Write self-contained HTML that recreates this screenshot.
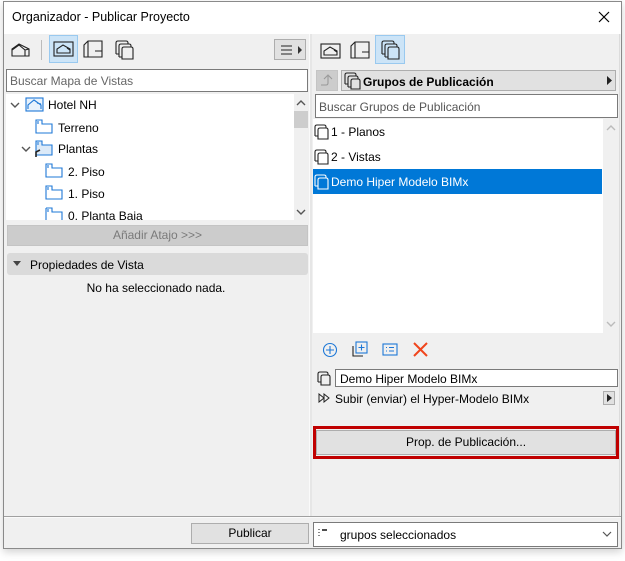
<!DOCTYPE html>
<html><head><meta charset="utf-8"><style>
*{box-sizing:border-box;margin:0;padding:0}
body{width:625px;height:561px;background:#fff;font-family:"Liberation Sans",sans-serif;font-size:12px;color:#000;position:relative;overflow:hidden}
.a{position:absolute}
.win{left:3px;top:1px;width:619px;height:548px;border:1px solid #8a8a8a;background:#f0f0f0;box-shadow:0 3px 8px rgba(0,0,0,.18)}
.box{background:#fff;border:1px solid #7a7a7a}
.btn{background:#e1e1e1;border:1px solid #adadad;text-align:center}
.t{white-space:nowrap}
</style></head><body>
<div class="a win"></div>
<div class="a" style="left:4px;top:2px;width:617px;height:32px;background:#fff"></div>
<div class="a t" style="left:12px;top:10px;font-size:12.5px">Organizador - Publicar Proyecto</div>
<svg class="a" style="left:598px;top:11px" width="12" height="12"><path d="M1 1L11 11M11 1L1 11" stroke="#000" stroke-width="1.2"/></svg>

<!-- pane separator -->
<div class="a" style="left:309px;top:34px;width:1px;height:482px;background:#fafafa"></div>
<div class="a" style="left:310px;top:34px;width:2px;height:482px;background:#e6e6e6"></div>

<!-- left toolbar -->
<svg class="a" style="left:11px;top:42px" width="20" height="16"><path d="M1 14V7L8 2L18 7V14Z M1 8L8 3L14 8V14 M14 8L18 7" fill="none" stroke="#222" stroke-width="1.1"/></svg>
<div class="a" style="left:41px;top:40px;width:1px;height:20px;background:#bbb"></div>
<div class="a" style="left:49px;top:35px;width:29px;height:28px;background:#cce4f7;border:1px solid #99c9ef"></div>
<svg class="a" style="left:53px;top:40px" width="22" height="18"><rect x="1" y="2" width="19" height="14" fill="none" stroke="#222" stroke-width="1.1"/><path d="M4 13V9L10 5L17 9V13Z M14 8L17 10" fill="none" stroke="#222" stroke-width="1.1"/></svg>
<svg class="a" style="left:83px;top:40px" width="20" height="19"><path d="M1 17V5L5 1H19V17Z M5 1V17 M12 11H19" fill="none" stroke="#222" stroke-width="1.1"/></svg>
<svg class="a" style="left:114px;top:40px" width="20" height="20"><path d="M2 14V3Q2 1 4 1H12Q14 1 14 3V4 M5 17V6Q5 4 7 4H15Q17 4 17 6V7 M8 19V9Q8 7 10 7H17Q19 7 19 9V19Z M2 14H5 M5 17H8" fill="none" stroke="#222" stroke-width="1.1"/></svg>
<div class="a btn" style="left:274px;top:39px;width:32px;height:21px"></div>
<svg class="a" style="left:280px;top:44px" width="24" height="12"><path d="M1 2H12M1 6H12M1 10H12" stroke="#222" stroke-width="1.1"/><path d="M18 2L22 6L18 10Z" fill="#333"/></svg>

<div class="a box" style="left:6px;top:69px;width:302px;height:23px"></div>
<div class="a t" style="left:10px;top:74px;color:#666">Buscar Mapa de Vistas</div>

<!-- tree -->
<div class="a" style="left:6px;top:94px;width:288px;height:126px;background:#fff"></div>
<div class="a" style="left:294px;top:94px;width:14px;height:126px;background:#f0f0f0"></div>
<svg class="a" style="left:296px;top:99px" width="10" height="8"><path d="M1 6L5 2L9 6" fill="none" stroke="#555" stroke-width="1.4"/></svg>
<div class="a" style="left:294px;top:111px;width:14px;height:17px;background:#cdcdcd"></div>
<svg class="a" style="left:296px;top:208px" width="10" height="8"><path d="M1 2L5 6L9 2" fill="none" stroke="#555" stroke-width="1.4"/></svg>

<svg class="a" style="left:10px;top:101px" width="10" height="8"><path d="M1 2L5 6L9 2" fill="none" stroke="#555" stroke-width="1.4"/></svg>
<svg class="a" style="left:25px;top:96px" width="20" height="17"><rect x="1" y="2" width="17" height="13" fill="#e8f2fc" stroke="#1e78d7" stroke-width="1.1"/><path d="M3 13V9L9 4L16 9V13 M12 7L16 8" fill="none" stroke="#1e78d7" stroke-width="1.1"/></svg>
<div class="a t" style="left:48px;top:98px">Hotel NH</div>

<svg class="a" style="left:35px;top:119px" width="19" height="16"><path d="M1 1H7V5H17V14H1Z M3 2V5" fill="none" stroke="#1e78d7" stroke-width="1.1"/></svg>
<div class="a t" style="left:58px;top:121px">Terreno</div>

<svg class="a" style="left:21px;top:145px" width="10" height="8"><path d="M1 2L5 6L9 2" fill="none" stroke="#555" stroke-width="1.4"/></svg>
<svg class="a" style="left:34px;top:140px" width="20" height="18"><path d="M2 1H8V5H18V15H2Z" fill="#dceaf8" stroke="#1e78d7" stroke-width="1.1"/><path d="M4 2V5" stroke="#1e78d7"/><path d="M2 17V12L6 10" fill="none" stroke="#222" stroke-width="1.6"/></svg>
<div class="a t" style="left:58px;top:142px">Plantas</div>

<svg class="a" style="left:45px;top:163px" width="19" height="16"><path d="M1 1H7V5H17V14H1Z M3 2V5" fill="none" stroke="#1e78d7" stroke-width="1.1"/></svg>
<div class="a t" style="left:68px;top:165px">2. Piso</div>
<svg class="a" style="left:45px;top:185px" width="19" height="16"><path d="M1 1H7V5H17V14H1Z M3 2V5" fill="none" stroke="#1e78d7" stroke-width="1.1"/></svg>
<div class="a t" style="left:68px;top:187px">1. Piso</div>
<svg class="a" style="left:45px;top:207px" width="19" height="13"><path d="M1 1H7V5H17V14 M1 1V14 M3 2V5" fill="none" stroke="#1e78d7" stroke-width="1.1"/></svg>
<div class="a" style="left:68px;top:209px;width:100px;height:11px;overflow:hidden"><span class="t">0. Planta Baja</span></div>

<div class="a" style="left:7px;top:225px;width:301px;height:21px;background:#cccccc;border:1px solid #c4c4c4;text-align:center;line-height:19px;color:#7a7a7a">Añadir Atajo &gt;&gt;&gt;</div>
<div class="a" style="left:7px;top:253px;width:301px;height:22px;background:#dadada;border-radius:3px"></div>
<svg class="a" style="left:13px;top:261px" width="8" height="6"><path d="M0 0H8L4 5Z" fill="#444"/></svg>
<div class="a t" style="left:30px;top:258px">Propiedades de Vista</div>
<div class="a t" style="left:0;top:281px;width:312px;text-align:center">No ha seleccionado nada.</div>

<!-- right toolbar -->
<svg class="a" style="left:320px;top:42px" width="22" height="18"><rect x="1" y="2" width="19" height="14" fill="none" stroke="#222" stroke-width="1.1"/><path d="M4 13V9L10 5L17 9V13Z M14 8L17 10" fill="none" stroke="#222" stroke-width="1.1"/></svg>
<svg class="a" style="left:350px;top:41px" width="20" height="19"><path d="M1 17V5L5 1H19V17Z M5 1V17 M12 11H19" fill="none" stroke="#222" stroke-width="1.1"/></svg>
<div class="a" style="left:375px;top:35px;width:30px;height:29px;background:#cce4f7;border:1px solid #99c9ef"></div>
<svg class="a" style="left:380px;top:40px" width="20" height="20"><path d="M2 14V3Q2 1 4 1H12Q14 1 14 3V4 M5 17V6Q5 4 7 4H15Q17 4 17 6V7 M8 19V9Q8 7 10 7H17Q19 7 19 9V19Z M2 14H5 M5 17H8" fill="none" stroke="#222" stroke-width="1.1"/></svg>

<div class="a" style="left:316px;top:70px;width:22px;height:21px;background:#cccccc;border:1px solid #c4c4c4"></div>
<svg class="a" style="left:319px;top:73px" width="16" height="15"><path d="M2 12H7Q9 12 9 10V3 M5 6L9 2L13 6" fill="none" stroke="#999" stroke-width="1.1"/></svg>
<div class="a btn" style="left:341px;top:70px;width:275px;height:21px"></div>
<svg class="a" style="left:343px;top:72px" width="18" height="18"><path d="M2 12V3Q2 1 4 1H11Q13 1 13 3V4 M5 15V6Q5 4 7 4H13Q15 4 15 6V7 M8 17V9Q8 7 10 7H15Q17 7 17 9V17Z M2 12H5 M5 15H8" fill="none" stroke="#222" stroke-width="1.1"/></svg>
<div class="a t" style="left:363px;top:75px;font-weight:bold">Grupos de Publicación</div>
<svg class="a" style="left:607px;top:76px" width="6" height="9"><path d="M0 0L5 4.5L0 9Z" fill="#222"/></svg>

<div class="a box" style="left:315px;top:94px;width:303px;height:24px"></div>
<div class="a t" style="left:319px;top:100px;color:#555">Buscar Grupos de Publicación</div>

<div class="a" style="left:313px;top:119px;width:290px;height:214px;background:#fff"></div>
<svg class="a" style="left:606px;top:124px" width="10" height="8"><path d="M1 6L5 2L9 6" fill="none" stroke="#bbb" stroke-width="1.4"/></svg>
<svg class="a" style="left:606px;top:320px" width="10" height="8"><path d="M1 2L5 6L9 2" fill="none" stroke="#bbb" stroke-width="1.4"/></svg>
<div class="a" style="left:619px;top:34px;width:1px;height:482px;background:#dcdcdc"></div>

<svg class="a" style="left:314px;top:124px" width="16" height="16"><path d="M1 12V3Q1 1 3 1H10Q12 1 12 3V4 M4 15V6Q4 4 6 4H12Q14 4 14 6V15Z M1 12H4" fill="none" stroke="#222" stroke-width="1.1"/></svg>
<div class="a t" style="left:331px;top:125px">1 - Planos</div>
<svg class="a" style="left:314px;top:149px" width="16" height="16"><path d="M1 12V3Q1 1 3 1H10Q12 1 12 3V4 M4 15V6Q4 4 6 4H12Q14 4 14 6V15Z M1 12H4" fill="none" stroke="#222" stroke-width="1.1"/></svg>
<div class="a t" style="left:331px;top:150px">2 - Vistas</div>
<div class="a" style="left:313px;top:169px;width:289px;height:25px;background:#0078d7"></div>
<svg class="a" style="left:314px;top:174px" width="16" height="16"><path d="M1 12V3Q1 1 3 1H10Q12 1 12 3V4 M4 15V6Q4 4 6 4H12Q14 4 14 6V15Z M1 12H4" fill="none" stroke="#fff" stroke-width="1.1"/></svg>
<div class="a t" style="left:331px;top:175px;color:#fff">Demo Hiper Modelo BIMx</div>

<!-- action icons -->
<svg class="a" style="left:322px;top:342px" width="16" height="16"><circle cx="8" cy="8" r="6.5" fill="none" stroke="#1e78d7" stroke-width="1.1"/><path d="M8 4V12M4 8H12" stroke="#1e78d7" stroke-width="1.1"/></svg>
<svg class="a" style="left:352px;top:341px" width="17" height="17"><path d="M1 5V15H11" fill="none" stroke="#222" stroke-width="1.1"/><rect x="4" y="1" width="11" height="11" fill="none" stroke="#1e78d7" stroke-width="1.1"/><path d="M9.5 3.5V9.5M6.5 6.5H12.5" stroke="#1e78d7" stroke-width="1.1"/></svg>
<svg class="a" style="left:382px;top:343px" width="16" height="13"><rect x="1" y="1" width="14" height="11" fill="none" stroke="#1e78d7" stroke-width="1.1"/><path d="M4 4.5H5M7 4.5H12M4 8H5M7 8H12" stroke="#1e78d7" stroke-width="1.1"/></svg>
<svg class="a" style="left:413px;top:342px" width="15" height="15"><path d="M1 1L14 14M14 1L1 14" stroke="#f0451c" stroke-width="2"/></svg>

<svg class="a" style="left:317px;top:371px" width="14" height="15"><path d="M1 11V3Q1 1 3 1H9Q11 1 11 3V4 M4 14V6Q4 4 6 4H11Q13 4 13 6V14Z M1 11H4" fill="none" stroke="#222" stroke-width="1.1"/></svg>
<div class="a box" style="left:335px;top:369px;width:283px;height:18px"></div>
<div class="a t" style="left:340px;top:372px">Demo Hiper Modelo BIMx</div>

<svg class="a" style="left:318px;top:393px" width="13" height="10"><path d="M1 1L6 5L1 9Z M6 1L11 5L6 9Z" fill="none" stroke="#222" stroke-width="1"/></svg>
<div class="a t" style="left:335px;top:392px">Subir (enviar) el Hyper-Modelo BIMx</div>
<div class="a btn" style="left:603px;top:391px;width:12px;height:14px"></div>
<svg class="a" style="left:607px;top:394px" width="5" height="8"><path d="M0 0L5 4L0 8Z" fill="#222"/></svg>

<div class="a" style="left:313px;top:426px;width:306px;height:33px;border:3px solid #c00000"></div>
<div class="a btn" style="left:316px;top:430px;width:300px;height:25px;line-height:23px">Prop. de Publicación...</div>

<!-- bottom -->
<div class="a" style="left:4px;top:516px;width:617px;height:1px;background:#a0a0a0"></div>
<div class="a" style="left:4px;top:517px;width:617px;height:1px;background:#fafafa"></div>
<div class="a btn" style="left:191px;top:523px;width:118px;height:21px;line-height:19px">Publicar</div>
<div class="a box" style="left:313px;top:522px;width:305px;height:25px"></div>
<svg class="a" style="left:318px;top:528px" width="10" height="10"><path d="M1 1V2M1 4V5M1 7V8" stroke="#555" stroke-width="1.4"/><path d="M4 2H9" stroke="#222" stroke-width="1.6"/></svg>
<div class="a t" style="left:340px;top:528px">grupos seleccionados</div>
<svg class="a" style="left:602px;top:531px" width="10" height="7"><path d="M1 1L5 5L9 1" fill="none" stroke="#555" stroke-width="1.2"/></svg>
</body></html>
